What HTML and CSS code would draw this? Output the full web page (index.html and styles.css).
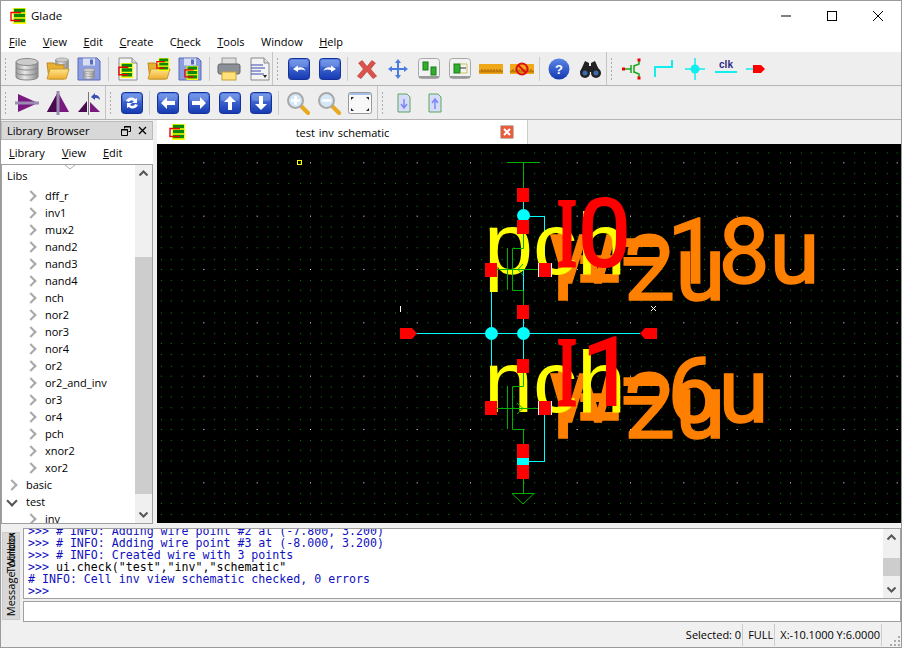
FILE: index.html
```html
<!doctype html>
<html lang="en">
<head>
<meta charset="utf-8">
<title>Glade</title>
<link rel="stylesheet" href="styles.css">
</head>
<body>
<svg width="0" height="0" class="defs">
  <defs>
    <linearGradient id="blue" x1="0" y1="0" x2="0" y2="1"><stop offset="0" stop-color="#5a86e8"/><stop offset="1" stop-color="#1538b0"/></linearGradient>
    <linearGradient id="disk" x1="0" y1="0" x2="1" y2="0"><stop offset="0" stop-color="#9a9a9a"/><stop offset=".4" stop-color="#e8e8e8"/><stop offset="1" stop-color="#8a8a8a"/></linearGradient>
    <linearGradient id="folder" x1="0" y1="0" x2="0" y2="1"><stop offset="0" stop-color="#ffe38a"/><stop offset="1" stop-color="#f0b030"/></linearGradient>
    <symbol id="cell" viewBox="0 0 16 16">
      <rect x="3" y="0" width="13" height="16" fill="#ff0"/>
      <path d="M4 2.500h11M4 7.500h11M4 12.500h11" stroke="#0a8a0a" stroke-width="3.600"/>
      <path d="M11 4.500H1v8h10" stroke="#e00" stroke-width="1.400" fill="none"/>
    </symbol>
    <symbol id="db" viewBox="0 0 24 24">
      <path d="M1 5v15c0 4 22 4 22 0V5z" fill="url(#disk)" stroke="#888"/>
      <ellipse cx="12" cy="5" rx="11" ry="3.500" fill="#ccc" stroke="#888"/>
      <path d="M1 10c0 4 22 4 22 0M1 15c0 4 22 4 22 0" fill="none" stroke="#888"/>
    </symbol>
    <symbol id="open" viewBox="0 0 24 24">
      <path d="M1 6h7l2 2h8v14H3z" fill="#e8b030" stroke="#b88a20"/>
      <path d="M4 12h19l-3 10H1z" fill="url(#folder)" stroke="#c89a30"/>
    </symbol>
    <symbol id="floppy" viewBox="0 0 24 24">
      <path d="M1 1h19l3 3v19H1z" fill="#8d9ee0" stroke="#5a6ab8"/>
      <rect x="6" y="1.500" width="12" height="7" fill="#d8def4"/>
      <rect x="13" y="2.500" width="3" height="5" fill="#5a6ab8"/>
    </symbol>
    <symbol id="bluebtn" viewBox="0 0 22 22">
      <rect x="0.500" y="0.500" width="21" height="21" rx="3" fill="url(#blue)" stroke="#16309a"/>
      <rect x="2" y="2" width="18" height="7" rx="2" fill="#fff" opacity=".18"/>
    </symbol>
    <symbol id="page" viewBox="0 0 20 24">
      <path d="M1 1h13l5 5v17H1z" fill="#f4f4f4" stroke="#8a8a8a"/>
      <path d="M14 1v5h5" fill="#ddd" stroke="#8a8a8a"/>
    </symbol>
    <symbol id="lens" viewBox="0 0 24 24">
      <path d="M15 15l7 7" stroke="#e8a820" stroke-width="4" stroke-linecap="round"/>
      <circle cx="9.500" cy="9.500" r="7.500" fill="#d4e8f8" stroke="#a8a8a8" stroke-width="2"/>
    </symbol>
    <symbol id="sheet" viewBox="0 0 14 20">
      <path d="M1 1h9l3 3v15H1z" fill="#d8dcfa" stroke="#5aa85a"/>
    </symbol>
    <symbol id="btn" viewBox="0 0 22 22">
      <rect x="0.500" y="0.500" width="21" height="20" rx="3" fill="#f2f2f2" stroke="#a8a8a8"/>
      <path d="M1 19h20" stroke="#999" stroke-width="2"/>
    </symbol>
    <symbol id="ruler" viewBox="0 0 24 12">
      <rect x="0" y="1" width="24" height="10" fill="#f0a818"/>
      <path d="M0 8.500h24" stroke="#c07808" stroke-width="2"/>
      <path d="M3 6v2M6 6v2M9 6v2M12 6v2M15 6v2M18 6v2M21 6v2" stroke="#a06000"/>
    </symbol>
  </defs>
</svg>

<div class="window">
  <header class="titlebar">
    <svg class="app-icon"><use href="#cell"/></svg>
    <span class="title">Glade</span>
    <div class="winbtns">
      <svg width="46" height="30" viewBox="0 0 46 30"><path d="M18 15h10" stroke="#000"/></svg>
      <svg width="46" height="30" viewBox="0 0 46 30"><rect x="18.500" y="10.500" width="9" height="9" fill="none" stroke="#000"/></svg>
      <svg width="46" height="30" viewBox="0 0 46 30"><path d="M18 10l10 10M28 10L18 20" stroke="#000"/></svg>
    </div>
  </header>

  <nav class="menubar">
    <span><u>F</u>ile</span><span><u>V</u>iew</span><span><u>E</u>dit</span><span><u>C</u>reate</span><span>C<u>h</u>eck</span><span><u>T</u>ools</span><span>Window</span><span><u>H</u>elp</span>
  </nav>

  <div class="toolrow">
    <div class="toolbar tb-main">
      <i class="grip"></i>
      <svg class="ic"><use href="#db"/></svg>
      <svg class="ic" viewBox="0 0 24 24"><use href="#db" x="9" y="0" width="14" height="14"/><use href="#open"/></svg>
      <svg class="ic" viewBox="0 0 24 24"><use href="#floppy"/><use href="#db" x="6" y="10" width="12" height="13"/></svg>
      <i class="sep"></i>
      <svg class="ic" viewBox="0 0 24 24"><use href="#page"/><use href="#cell" x="2" y="6" width="15" height="15"/></svg>
      <svg class="ic" viewBox="0 0 24 24"><use href="#open"/><use href="#cell" x="9" y="1" width="13" height="13"/></svg>
      <svg class="ic" viewBox="0 0 24 24"><use href="#floppy"/><use href="#cell" x="6" y="9" width="14" height="14"/></svg>
      <i class="sep"></i>
      <svg class="ic" viewBox="0 0 24 24"><rect x="5" y="1" width="14" height="7" fill="#ddd" stroke="#999"/><rect x="1" y="7" width="22" height="10" rx="2" fill="#8a8f98" stroke="#666"/><rect x="5" y="15" width="14" height="8" fill="#ffe27a" stroke="#c8a030"/></svg>
      <svg class="ic" viewBox="0 0 24 24"><use href="#page"/><path d="M3 8h12M3 11h14M3 14h10M3 17h13" stroke="#3a48b0"/><path d="M15 18h4l-2 3z" fill="#222"/></svg>
    </div>
    <div class="toolbar tb-edit">
      <i class="grip"></i>
      <svg class="ic ic-blue" viewBox="0 0 22 22"><use href="#bluebtn"/><path d="M5 11l5-3.500v2.200c3-.8 6-.3 7.500 3-2.500-1.500-4.500-1.500-7.500-.7V14z" fill="#fff"/></svg>
      <svg class="ic ic-blue" viewBox="0 0 22 22"><use href="#bluebtn"/><path d="M17 11l-5-3.500v2.200c-3-.8-6-.3-7.500 3 2.500-1.500 4.500-1.500 7.500-.7V14z" fill="#fff"/></svg>
      <i class="sep tight"></i>
      <svg class="ic" viewBox="0 0 20 20"><path d="M3 5l4 5-5 6 3 2 5-6 5 6 3-2-5-6 4-5-3-2-4 5-4-5z" fill="#d9534a" stroke="#b03830" stroke-width=".5"/></svg>
      <svg class="ic" viewBox="0 0 24 24"><path d="M12 2l3 4h-2v5h5V9l4 3-4 3v-2h-5v5h2l-3 4-3-4h2v-5H6v2l-4-3 4-3v2h5V6H9z" fill="#4a7ce0"/></svg>
      <svg class="ic ic-blue" viewBox="0 0 22 22"><use href="#btn"/><rect x="5" y="4" width="5" height="8" fill="#2fb02f" stroke="#1a7a1a"/><rect x="13" y="9" width="5" height="8" fill="#2fb02f" stroke="#1a7a1a"/></svg>
      <svg class="ic ic-blue" viewBox="0 0 22 22"><use href="#btn"/><rect x="5" y="6" width="6" height="9" fill="#2fb02f" stroke="#1a7a1a"/><path d="M11 6h7v9h-7" fill="none" stroke="#c8c060"/><path d="M11 10h6" stroke="#333"/></svg>
      <svg class="ic" viewBox="0 0 24 24"><use href="#ruler" y="6" width="24" height="12"/></svg>
      <svg class="ic" viewBox="0 0 24 24"><use href="#ruler" y="6" width="24" height="12"/><circle cx="12" cy="12" r="5.500" fill="none" stroke="#e01010" stroke-width="2"/><path d="M8 8l8 8" stroke="#e01010" stroke-width="2"/></svg>
      <i class="sep tight"></i>
      <svg class="ic ic-blue" viewBox="0 0 22 22"><circle cx="11" cy="11" r="10.500" fill="url(#blue)"/><text x="11" y="16" class="qm">?</text></svg>
      <svg class="ic" viewBox="0 0 24 24"><path d="M2 15l5-11 4 2v3h2V6l4-2 5 11" fill="#222"/><circle cx="7" cy="16" r="5" fill="#222"/><circle cx="18" cy="16" r="5" fill="#222"/><circle cx="7" cy="16" r="2.500" fill="#3a6ab0"/><circle cx="18" cy="16" r="2.500" fill="#3a6ab0"/></svg>
    </div>
    <div class="toolbar tb-draw">
      <i class="grip"></i>
      <svg class="ic" viewBox="0 0 24 24"><path d="M3 12h7M10 8v8M13 8v8M13 9l5-2V3M13 15l5 2v4" fill="none" stroke="#1aa81a" stroke-width="1.500"/><rect x="1" y="10.500" width="3" height="3" fill="#e00"/><rect x="16.500" y="1.500" width="3" height="3" fill="#e00"/><rect x="16.500" y="19.500" width="3" height="3" fill="#e00"/></svg>
      <svg class="ic" viewBox="0 0 24 24"><path d="M3 20V10h17V3" fill="none" stroke="#1ee" stroke-width="2"/></svg>
      <svg class="ic" viewBox="0 0 24 24"><path d="M12 1v22M2 12h20" stroke="#1ee" stroke-width="1.500"/><circle cx="12" cy="12" r="4.500" fill="#1ee"/></svg>
      <svg class="ic" viewBox="0 0 24 24"><text x="12" y="11" class="clk">clk</text><path d="M1 15h22" stroke="#1ee" stroke-width="2"/></svg>
      <svg class="ic" viewBox="0 0 24 24"><path d="M1 12h7" stroke="#1ee" stroke-width="1.500"/><path d="M8 8h8l4 4-4 4H8z" fill="#f00"/></svg>
    </div>
  </div>

  <div class="toolrow">
    <div class="toolbar tb-flip">
      <i class="grip"></i>
      <svg class="ic" viewBox="0 0 24 24"><path d="M3 3l20 9-20 9z" fill="#7a1a80"/><path d="M0 12h24" stroke="#9a8ab0" stroke-width="3"/></svg>
      <svg class="ic" viewBox="0 0 24 24"><path d="M12 1L1 21h22z" fill="#7a1a80"/><path d="M12 21L1 21 12 1z" fill="#4a0a50"/><path d="M12 0v24" stroke="#9a8ab0" stroke-width="3"/></svg>
      <svg class="ic" viewBox="0 0 24 24"><path d="M1 21l9-11v11z" fill="#4a0a50"/><path d="M13 11l10 10H13z" fill="#7a1a80"/><path d="M11.500 1v23" stroke="#777"/><path d="M14 6l4-4v2c3 0 5 2 5 5-2-2-3-2-5-2v2z" fill="#3a50b0"/></svg>
    </div>
    <div class="toolbar tb-nav">
      <i class="grip"></i>
      <svg class="ic ic-blue" viewBox="0 0 22 22"><use href="#bluebtn"/><path d="M5 9c1-3 6-5 9-2l2-1v5h-5l2-2c-2-1.500-4-1-5 1zM17 13c-1 3-6 5-9 2l-2 1v-5h5l-2 2c2 1.500 4 1 5-1z" fill="#fff"/></svg>
      <i class="sep tight tighter"></i>
      <svg class="ic ic-blue" viewBox="0 0 22 22"><use href="#bluebtn"/><path d="M4 11l6-6v4h8v4h-8v4z" fill="#fff"/></svg>
      <svg class="ic ic-blue" viewBox="0 0 22 22"><use href="#bluebtn"/><path d="M18 11l-6-6v4H4v4h8v4z" fill="#fff"/></svg>
      <svg class="ic ic-blue" viewBox="0 0 22 22"><use href="#bluebtn"/><path d="M11 4l6 6h-4v8H9v-8H5z" fill="#fff"/></svg>
      <svg class="ic ic-blue" viewBox="0 0 22 22"><use href="#bluebtn"/><path d="M11 18l6-6h-4V4H9v8H5z" fill="#fff"/></svg>
      <i class="sep tight"></i>
      <svg class="ic" viewBox="0 0 24 24"><use href="#lens"/><path d="M5 9.500h9M9.500 5v9" stroke="#fff" stroke-width="2.500"/></svg>
      <svg class="ic" viewBox="0 0 24 24"><use href="#lens"/><path d="M5 9.500h9" stroke="#fff" stroke-width="2.500"/></svg>
      <svg class="ic" viewBox="0 0 24 24"><rect x="0.500" y="1.500" width="23" height="21" rx="2" fill="#f8f8f8" stroke="#999"/><path d="M1 3h22" stroke="#a8c0e8" stroke-width="2"/><path d="M3 6l3 0-3 3zM21 6l-3 0 3 3zM3 20l3 0-3-3zM21 20l-3 0 3-3z" fill="#222"/></svg>
    </div>
    <div class="toolbar tb-push">
      <i class="grip"></i>
      <svg class="ic-sheet" viewBox="0 0 14 20"><use href="#sheet"/><path d="M7 6v9M4 11l3 4 3-4" fill="none" stroke="#7a8af0" stroke-width="1.500"/></svg>
      <svg class="ic-sheet" viewBox="0 0 14 20"><use href="#sheet"/><path d="M7 16V7M4 10l3-4 3 4" fill="none" stroke="#7a8af0" stroke-width="1.500"/></svg>
    </div>
  </div>

  <main class="workspace">
    <aside class="dock">
      <div class="dock-head">
        <span>Library Browser</span>
        <svg width="10" height="10" viewBox="0 0 10 10"><path d="M3.500 2.500v-2h6v5h-2M0.500 3.500h6v6h-6z" fill="none" stroke="#000"/><path d="M3 1h7M0 4h7" stroke="#000"/></svg>
        <svg width="9" height="9" viewBox="0 0 9 9"><path d="M1 1l7 7M8 1L1 8" stroke="#000" stroke-width="1.300"/></svg>
      </div>
      <div class="dock-menu"><span><u>L</u>ibrary</span><span><u>V</u>iew</span><span><u>E</u>dit</span></div>
      <div class="tree">
        <div class="tree-list">
          <svg class="more" width="12" height="5" viewBox="0 0 12 5"><path d="M1 0l5 4 5-4" fill="none" stroke="#aaa"/></svg>
          <div class="lib">Libs</div>
          <div class="cell">dff_r</div>
          <div class="cell">inv1</div>
          <div class="cell">mux2</div>
          <div class="cell">nand2</div>
          <div class="cell">nand3</div>
          <div class="cell">nand4</div>
          <div class="cell">nch</div>
          <div class="cell">nor2</div>
          <div class="cell">nor3</div>
          <div class="cell">nor4</div>
          <div class="cell">or2</div>
          <div class="cell">or2_and_inv</div>
          <div class="cell">or3</div>
          <div class="cell">or4</div>
          <div class="cell">pch</div>
          <div class="cell">xnor2</div>
          <div class="cell">xor2</div>
          <div class="group">basic</div>
          <div class="group open">test</div>
          <div class="cell">inv</div>
        </div>
        <div class="vscroll">
          <svg width="17" height="17" viewBox="0 0 17 17"><path d="M4.500 10.500L8.500 6.500l4 4" fill="none" stroke="#555" stroke-width="2"/></svg>
          <div class="track tree-track"><div class="thumb"></div></div>
          <svg width="17" height="17" viewBox="0 0 17 17"><path d="M4.500 6.500l4 4 4-4" fill="none" stroke="#555" stroke-width="2"/></svg>
        </div>
      </div>
    </aside>

    <section class="editor">
      <div class="tabbar">
        <div class="tab">
          <svg class="tab-icon"><use href="#cell"/></svg>
          <span>test inv schematic</span>
          <svg class="tab-close" width="14" height="14" viewBox="0 0 14 14"><rect x="0.500" y="0.500" width="13" height="13" rx="1" fill="#e85c40" stroke="#c8b8a8"/><path d="M4 4l6 6M10 4l-6 6" stroke="#fff" stroke-width="2"/></svg>
        </div>
      </div>
      <svg class="schematic" width="745" height="379" viewBox="157 144 745 379">
        <defs>
          <pattern id="grid" x="416.670" y="162.330" width="53.333" height="53.333" patternUnits="userSpaceOnUse">
            <g class="griddots">
              <rect x="11" width="1" height="1"/><rect x="21" width="1" height="1"/><rect x="32" width="1" height="1"/><rect x="43" width="1" height="1"/>
              <rect y="11" width="1" height="1"/><rect x="11" y="11" width="1" height="1"/><rect x="21" y="11" width="1" height="1"/><rect x="32" y="11" width="1" height="1"/><rect x="43" y="11" width="1" height="1"/>
              <rect y="21" width="1" height="1"/><rect x="11" y="21" width="1" height="1"/><rect x="21" y="21" width="1" height="1"/><rect x="32" y="21" width="1" height="1"/><rect x="43" y="21" width="1" height="1"/>
              <rect y="32" width="1" height="1"/><rect x="11" y="32" width="1" height="1"/><rect x="21" y="32" width="1" height="1"/><rect x="32" y="32" width="1" height="1"/><rect x="43" y="32" width="1" height="1"/>
              <rect y="43" width="1" height="1"/><rect x="11" y="43" width="1" height="1"/><rect x="21" y="43" width="1" height="1"/><rect x="32" y="43" width="1" height="1"/><rect x="43" y="43" width="1" height="1"/>
            </g>
            <rect width="1" height="1" fill="#fff"/>
          </pattern>
        </defs>
        <rect x="157" y="144" width="745" height="379" fill="#000"/>
        <rect x="157" y="144" width="745" height="379" fill="url(#grid)"/>

        <!-- wires -->
        <path class="wire" d="M523.500 202V360M491.500 270V402M416 333.500H640M523.500 216.500H544.500V263M544.500 415V461.500H529"/>

        <!-- labels -->
        <text class="par" x="549" y="283">w=18u</text>
        <text class="par" x="552" y="300">l=2u</text>
        <text class="par" x="549" y="422">w=6u</text>
        <text class="par" x="552" y="438">l=2u</text>
        <text class="sym" x="484" y="274">pch</text>
        <text class="sym" x="484" y="412">nch</text>
        <text class="inst inst-i" x="557" y="266" textLength="20" lengthAdjust="spacingAndGlyphs">I</text>
        <text class="inst" x="578" y="266">0</text>
        <text class="inst inst-i" x="557" y="405" textLength="20" lengthAdjust="spacingAndGlyphs">I</text>
        <text class="inst" x="582" y="405">1</text>

        <!-- devices -->
        <path class="dev" d="M507 162.500H540M523.500 162V188M523.500 234V248.500H512.500V290.500H523.500V305M491 269.500H545M507.500 248V290M523 264L518 269.500 523 275"/>
        <path class="dev" d="M523.500 372V386.500H512.500V429.500H523.500V444M491 408.500H545M507.500 386V429M517 403L523 408.500 517 414M523.500 479V493.500M512 493.500H534L523 504 512 493.500"/>

        <!-- pins -->
        <g fill="#0ff">
          <circle cx="523.500" cy="215.500" r="6.500"/>
          <circle cx="491.500" cy="333.500" r="6.500"/>
          <circle cx="523.500" cy="333.500" r="6.500"/>
        </g>
        <g fill="#f00">
          <rect x="517" y="188" width="12" height="14"/>
          <rect x="517" y="220" width="12" height="14"/>
          <rect x="485" y="263" width="12" height="14"/>
          <rect x="539" y="263" width="12" height="14"/>
          <rect x="517" y="305" width="12" height="14"/>
          <rect x="517" y="359" width="12" height="14"/>
          <rect x="485" y="401" width="12" height="14"/>
          <rect x="539" y="401" width="12" height="14"/>
          <rect x="517" y="444" width="12" height="35"/>
          <path d="M400 328h12l5 5.500-5 5.500h-12z"/>
          <path d="M657 328h-12l-5 5.500 5 5.500h12z"/>
        </g>
        <path class="thin" d="M538.500 263v14M551.500 263v14M538.500 401v14M551.500 401v14" stroke="#fff"/>
        <rect x="517" y="458" width="12" height="7" fill="#0ff"/>
        <path class="thin" d="M400.500 306v6M651 306l5 5M656 306l-5 5" stroke="#ffe"/>
        <rect x="297.500" y="160.500" width="4" height="4" fill="none" stroke="#ff0"/>
      </svg>
    </section>
  </main>

  <div class="console">
    <div class="console-tabs"><span class="vtab">Message Window</span><span class="vtab vtab-x">Toolbox</span></div>
    <div class="console-main">
      <div class="log">
        <pre class="log-text"><span class="in">&gt;&gt;&gt; # INFO: Adding wire point #2 at (-7.800, 3.200)</span>
<span class="in">&gt;&gt;&gt; # INFO: Adding wire point #3 at (-8.000, 3.200)</span>
<span class="in">&gt;&gt;&gt; # INFO: Created wire with 3 points</span>
<span class="in">&gt;&gt;&gt; </span>ui.check("test","inv","schematic"
<span class="in"># INFO: Cell inv view schematic checked, 0 errors</span>
<span class="in">&gt;&gt;&gt;</span></pre>
        <div class="vscroll">
          <svg width="17" height="17" viewBox="0 0 17 17"><path d="M4.500 10.500L8.500 6.500l4 4" fill="none" stroke="#555" stroke-width="2"/></svg>
          <div class="track log-track"><div class="thumb"></div></div>
          <svg width="17" height="17" viewBox="0 0 17 17"><path d="M4.500 6.500l4 4 4-4" fill="none" stroke="#555" stroke-width="2"/></svg>
        </div>
      </div>
      <div class="cmd"></div>
    </div>
  </div>

  <footer class="statusbar">
    <span class="st">Selected: 0</span><span class="st">FULL</span><span class="st">X:-10.1000 Y:6.0000</span>
    <svg class="grip-corner" width="12" height="12" viewBox="0 0 12 12"><path d="M9 1h2v2H9zM5 5h2v2H5zM9 5h2v2H9zM1 9h2v2H1zM5 9h2v2H5zM9 9h2v2H9z" fill="#aaa"/></svg>
  </footer>
</div>
</body>
</html>
```

FILE: styles.css
```css
*{box-sizing:border-box;}
html,body{margin:0;padding:0;}
body{font-family:"Open Sans","Noto Sans",sans-serif;font-size:11px;color:#000;background:#fff;}
.defs{position:absolute;}
.window{width:902px;height:648px;border:1px solid #9a9a9a;display:flex;flex-direction:column;background:#f0f0f0;overflow:hidden;}

.titlebar{height:29px;background:#fff;display:flex;align-items:center;padding-left:9px;flex:none;}
.app-icon{width:16px;height:16px;}
.title{margin-left:5px;flex:1;font-size:11.500px;}
.winbtns{display:flex;}
.winbtns svg{display:block;}

.menubar{height:22px;background:#fff;display:flex;gap:16.500px;padding-left:8px;align-items:center;flex:none;}

.toolrow{display:flex;height:34px;background:#eee;border-bottom:1px solid #b4b4b4;flex:none;}
.toolbar{display:flex;align-items:center;height:33px;padding-left:3px;border-right:1px solid #c4c4c4;gap:7px;}
.tb-main{width:272px;}
.tb-edit{width:334px;}
.tb-draw{flex:1;border-right:0;}
.tb-flip{width:105px;}
.tb-nav{width:272px;}
.tb-push{flex:1;border-right:0;gap:17px;}
.tb-push .grip{margin-right:-5px;}
.ic{width:24px;height:24px;flex:none;}
.ic-blue{width:22px;height:22px;margin:0 1px;}
.ic-sheet{width:14px;height:20px;flex:none;}
.grip{width:4px;height:24px;flex:none;background:radial-gradient(circle,#aaa 1px,transparent 1px) 0 0/3px 4px;}
.sep{width:1px;height:24px;background:#ccc;flex:none;}
.sep.tight{margin-left:-2px;}
.sep.tighter{margin-right:-1px;}
.qm{font:bold 13px "Liberation Sans",sans-serif;fill:#fff;text-anchor:middle;}
.clk{font:bold 10px "Liberation Sans",sans-serif;fill:#2a2a80;text-anchor:middle;}

.workspace{flex:1;display:flex;min-height:0;}
.dock{width:152px;flex:none;display:flex;flex-direction:column;margin-top:1px;}
.dock-head{height:19px;background:#d8d8d8;border:1px solid #bbb;display:flex;align-items:center;gap:7px;padding:0 5px;flex:none;word-spacing:1px;}
.dock-head span{flex:1;}
.dock-menu{height:24px;background:#fff;display:flex;gap:17px;padding-left:8px;align-items:center;flex:none;}
.tree{flex:1;display:flex;border:1px solid #a0a0a0;background:#fff;min-height:0;overflow:hidden;}
.tree-list{flex:1;position:relative;padding-top:1px;overflow:hidden;}
.more{position:absolute;left:62px;top:0;}
.lib{height:21px;line-height:19px;padding-left:5px;}
.cell{height:17px;line-height:17px;padding-left:43px;position:relative;}
.group{height:17px;line-height:17px;padding-left:24px;position:relative;}
.cell::before,.group::before{content:"";position:absolute;width:6px;height:6px;border-top:2px solid #a8a8a8;border-right:2px solid #a8a8a8;transform:rotate(45deg);top:5px;}
.cell::before{left:25px;}
.group::before{left:6px;}
.group.open::before{transform:rotate(135deg);border-color:#555;top:4px;}
.vscroll{width:17px;flex:none;display:flex;flex-direction:column;background:#f0f0f0;}
.vscroll svg{display:block;flex:none;}
.track{flex:1;display:flex;flex-direction:column;}
.tree-track{justify-content:flex-end;padding-bottom:12px;}
.tree-track .thumb{height:237px;background:#cdcdcd;}
.log-track{justify-content:flex-end;padding-bottom:5px;}
.log-track .thumb{height:18px;background:#cdcdcd;}

.editor{flex:1;display:flex;flex-direction:column;min-width:0;margin-left:4px;}
.tabbar{height:24px;background:#f0f0f0;flex:none;}
.tab{width:371px;height:24px;background:#fff;display:flex;align-items:center;padding-left:12px;border-right:1px solid #ccc;}
.tab-icon{width:16px;height:16px;}
.tab span{flex:1;text-align:center;word-spacing:1px;}
.tab-close{margin-right:13px;}
.schematic{display:block;flex:none;}
.griddots{fill:#00a000;shape-rendering:crispEdges;}
.wire{fill:none;stroke:#0ff;stroke-width:1;shape-rendering:crispEdges;}
.dev{fill:none;stroke:#00b000;stroke-width:1;}
.thin{stroke-width:1;}
.sym{font:88px "Liberation Sans",sans-serif;fill:#ff0;}
.par{font:91px Roboto,sans-serif;fill:#ff8000;stroke:#ff8000;stroke-width:1.500;}
.inst{font:94px Roboto,sans-serif;fill:#f00;stroke:#f00;stroke-width:2;}
.inst-i{font:bold 100px "Liberation Serif",serif;}

.console{height:98px;display:flex;flex:none;padding:4px 0 0 1px;background:#f0f0f0;}
.console-tabs{width:18px;flex:none;height:88px;margin-top:4px;position:relative;background:#d8d8d8;border:1px solid #ccc;margin-right:3px;overflow:hidden;}
.vtab{position:absolute;left:1px;bottom:3px;writing-mode:vertical-rl;transform:rotate(180deg);font-size:11px;line-height:14px;white-space:nowrap;}
.vtab-x{bottom:46px;}
.console-main{flex:1;display:flex;flex-direction:column;gap:2px;min-width:0;}
.log{height:71px;display:flex;border:1px solid #a0a0a0;background:#fff;flex:none;overflow:hidden;}
.log-text{flex:1;margin:-4px 0 0 4px;font:11.600px/12px "DejaVu Sans Mono",monospace;color:#000;overflow:hidden;}
.in{color:#1010c0;}
.cmd{height:21px;border:1px solid #a0a0a0;background:#fff;flex:none;}

.statusbar{height:25px;flex:none;display:flex;justify-content:flex-end;align-items:center;background:#f0f0f0;position:relative;padding-right:19px;}
.st{padding:0 1px 0 5px;border-right:1px solid #ccc;line-height:22px;}
.grip-corner{position:absolute;right:0;bottom:0;}
```
